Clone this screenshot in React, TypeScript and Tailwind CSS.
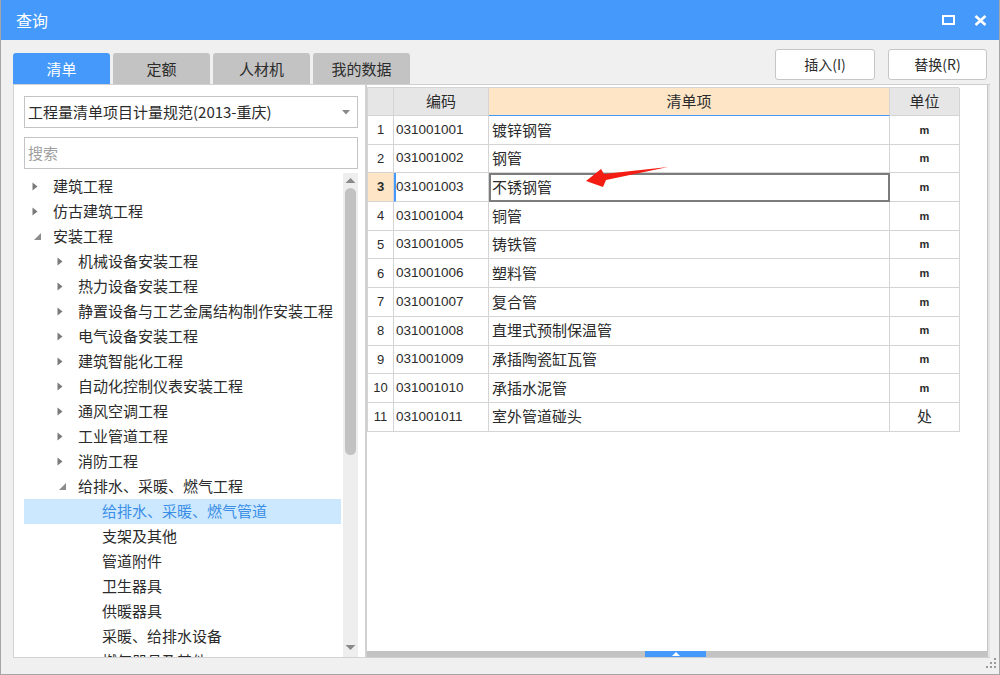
import React from "react";

type Node = { l: 0 | 1 | 2; t: string; a?: "c" | "e"; sel?: boolean };

const tree: Node[] = [
  { l: 0, t: "建筑工程", a: "c" },
  { l: 0, t: "仿古建筑工程", a: "c" },
  { l: 0, t: "安装工程", a: "e" },
  { l: 1, t: "机械设备安装工程", a: "c" },
  { l: 1, t: "热力设备安装工程", a: "c" },
  { l: 1, t: "静置设备与工艺金属结构制作安装工程", a: "c" },
  { l: 1, t: "电气设备安装工程", a: "c" },
  { l: 1, t: "建筑智能化工程", a: "c" },
  { l: 1, t: "自动化控制仪表安装工程", a: "c" },
  { l: 1, t: "通风空调工程", a: "c" },
  { l: 1, t: "工业管道工程", a: "c" },
  { l: 1, t: "消防工程", a: "c" },
  { l: 1, t: "给排水、采暖、燃气工程", a: "e" },
  { l: 2, t: "给排水、采暖、燃气管道", sel: true },
  { l: 2, t: "支架及其他" },
  { l: 2, t: "管道附件" },
  { l: 2, t: "卫生器具" },
  { l: 2, t: "供暖器具" },
  { l: 2, t: "采暖、给排水设备" },
  { l: 2, t: "燃气器具及其他" },
];

const rows: [string, string, string][] = [
  ["031001001", "镀锌钢管", "m"],
  ["031001002", "钢管", "m"],
  ["031001003", "不锈钢管", "m"],
  ["031001004", "铜管", "m"],
  ["031001005", "铸铁管", "m"],
  ["031001006", "塑料管", "m"],
  ["031001007", "复合管", "m"],
  ["031001008", "直埋式预制保温管", "m"],
  ["031001009", "承插陶瓷缸瓦管", "m"],
  ["031001010", "承插水泥管", "m"],
  ["031001011", "室外管道碰头", "处"],
];

const padByLevel = ["pl-[8px]", "pl-[33px]", "pl-[78px]"];

function Arrow({ a }: { a?: "c" | "e" }) {
  if (!a) return null;
  return (
    <div className="w-[21px] h-[25px] flex items-center shrink-0">
      {a === "c" ? (
        <svg width="6" height="9" viewBox="0 0 6 9">
          <polygon points="0.5,0.5 5.5,4.5 0.5,8.5" fill="#7a7a7a" />
        </svg>
      ) : (
        <svg width="9" height="9" viewBox="0 0 9 9" className="ml-[1px]">
          <polygon points="8,1 8,8 1,8" fill="#8c8c8c" />
        </svg>
      )}
    </div>
  );
}

export default function App() {
  return (
    <div className="relative w-[1000px] h-[675px] bg-[#f0f0f0] border-x border-b border-[#a6a6a6] flex flex-col overflow-hidden font-['Noto_Sans_CJK_SC',sans-serif] text-[#2b2b2b]">
      {/* Title bar */}
      <div className="h-[40px] bg-[#4499fa] flex items-center justify-between pl-[15px] pr-[12px] text-white shrink-0">
        <span className="text-[16px] leading-none">查询</span>
        <div className="flex items-center gap-[19px]">
          <svg width="13" height="10" viewBox="0 0 13 10">
            <rect x="1" y="1" width="11" height="8" fill="none" stroke="#fff" strokeWidth="2" />
          </svg>
          <svg width="13" height="11" viewBox="0 0 13 11">
            <path d="M1.5 1 L11.5 10 M11.5 1 L1.5 10" stroke="#fff" strokeWidth="2.6" />
          </svg>
        </div>
      </div>

      {/* Body */}
      <div className="flex-1 flex flex-col pl-[12px] pr-[9px] pt-[9px]">
        {/* Tabs + buttons */}
        <div className="h-[35px] flex justify-between shrink-0">
          <div className="self-end flex gap-[3px]">
            <div className="w-[97px] h-[31px] rounded-t-[3px] bg-[#4499fa] text-white text-[15px] flex items-center justify-center pt-[1px]">清单</div>
            <div className="w-[97px] h-[31px] rounded-t-[3px] bg-[#c3c3c3] text-[15px] flex items-center justify-center pt-[1px]">定额</div>
            <div className="w-[97px] h-[31px] rounded-t-[3px] bg-[#c3c3c3] text-[15px] flex items-center justify-center pt-[1px]">人材机</div>
            <div className="w-[97px] h-[31px] rounded-t-[3px] bg-[#c3c3c3] text-[15px] flex items-center justify-center pt-[1px]">我的数据</div>
          </div>
          <div className="self-start flex gap-[13px] mr-[3px]">
            <button className="w-[100px] h-[31px] bg-white border border-[#c6c6c6] rounded-[3px] text-[14px] flex items-center justify-center">插入(I)</button>
            <button className="w-[99px] h-[31px] bg-white border border-[#c6c6c6] rounded-[3px] text-[14px] flex items-center justify-center">替换(R)</button>
          </div>
        </div>

        {/* Main */}
        <div className="h-[574px] flex shrink-0">
          {/* Left panel */}
          <div className="w-[353px] bg-white border border-[#d2d2d2] flex flex-col pl-[10px] pr-[7px] pt-[11px]">
            <div className="h-[32px] border border-[#c4c4c4] flex items-center justify-between pl-[3px] pr-[7px] text-[15px] shrink-0">
              <span>工程量清单项目计量规范(2013-重庆)</span>
              <svg width="8" height="5" viewBox="0 0 8 5">
                <polygon points="0,0 8,0 4,4.5" fill="#8a8a8a" />
              </svg>
            </div>
            <div className="mt-[9px] h-[32px] border border-[#c4c4c4] flex items-center pl-[3px] text-[15px] text-[#a0a0a0] shrink-0">搜索</div>
            <div className="mt-[4px] flex-1 flex gap-[2px] overflow-hidden">
              <div className="flex-1 flex flex-col overflow-hidden pt-[1px]">
                {tree.map((n, i) => (
                  <div
                    key={i}
                    className={`h-[25px] shrink-0 flex items-center text-[15px] whitespace-nowrap ${padByLevel[n.l]} ${n.sel ? "bg-[#cce8ff] text-[#3a8ee6]" : ""}`}
                  >
                    <Arrow a={n.a} />
                    <span>{n.t}</span>
                  </div>
                ))}
              </div>
              <div className="w-[15px] bg-[#eeeeee] flex flex-col items-center">
                <svg width="11" height="14" viewBox="0 0 11 14" className="mt-[1px] shrink-0">
                  <polygon points="0.5,9 10.5,9 5.5,4" fill="#8a8a8a" />
                </svg>
                <div className="w-[11px] h-[267px] rounded-full bg-[#c2c2c2] shrink-0" />
                <div className="flex-1" />
                <svg width="11" height="14" viewBox="0 0 11 14" className="mb-[2px] shrink-0">
                  <polygon points="0.5,4 10.5,4 5.5,9" fill="#8a8a8a" />
                </svg>
              </div>
            </div>
          </div>

          {/* Right panel */}
          <div className="flex-1 flex border-y border-l border-[#cfcfcf]">
            <div className="flex-1 bg-white flex flex-col">
              <div className="flex-1 pt-[2px]">
                <div className="grid grid-cols-[26px_95px_401px_70px] w-[592px] border-l border-t border-[#d4d4d4]">
                  <div className="h-[28px] bg-[#e6e6e6] border-r border-b border-[#d4d4d4]" />
                  <div className="h-[28px] bg-[#e6e6e6] border-r border-b border-[#d4d4d4] flex items-center justify-center text-[15px]">编码</div>
                  <div className="h-[28px] bg-[#fde5c6] border-r border-b border-b-[#4499fa] border-r-[#d4d4d4] flex items-center justify-center text-[15px]">清单项</div>
                  <div className="h-[28px] bg-[#e6e6e6] border-r border-b border-[#d4d4d4] flex items-center justify-center text-[15px]">单位</div>
                  {rows.map((r, i) => {
                    const sel = i === 2;
                    return (
                      <React.Fragment key={i}>
                        <div
                          className={`h-[28.7px] border-r border-b border-[#d4d4d4] flex items-center justify-center font-['Liberation_Sans',sans-serif] text-[13px] ${sel ? "bg-[#fde5c6] font-bold" : ""}`}
                        >
                          {i + 1}
                        </div>
                        <div
                          className={`h-[28.7px] border-r border-b border-[#d4d4d4] flex items-center font-['Liberation_Sans',sans-serif] text-[13.5px] ${sel ? "border-l-2 border-l-[#4499fa] pl-0" : "pl-[2px]"}`}
                        >
                          {r[0]}
                        </div>
                        <div
                          className={`h-[28.7px] border-r border-b border-[#d4d4d4] flex items-center text-[15px] pl-[3px] ${sel ? "outline-2 outline-[#7c7c7c] -outline-offset-2" : ""}`}
                        >
                          {r[1]}
                        </div>
                        <div
                          className={`h-[28.7px] border-r border-b border-[#d4d4d4] flex items-center justify-center ${r[2] === "m" ? "font-['Liberation_Sans',sans-serif] text-[11px] font-bold" : "text-[15px]"}`}
                        >
                          {r[2]}
                        </div>
                      </React.Fragment>
                    );
                  })}
                </div>
              </div>
              <div className="relative h-[6px] bg-[#c3c3c3] shrink-0">
                <div className="absolute left-[278px] top-0 w-[61px] h-[6px] bg-[#4499fa] flex items-center justify-center">
                  <svg width="8" height="4" viewBox="0 0 8 4">
                    <polygon points="0,4 8,4 4,0" fill="#fff" />
                  </svg>
                </div>
              </div>
            </div>
            <div className="w-[3px] bg-[#e4e4e4] border-l border-[#c4c4c4]" />
          </div>
        </div>
      </div>

      {/* Red annotation arrow */}
      <svg className="absolute left-[584px] top-[164px]" width="86" height="28" viewBox="0 0 86 28">
        <polygon points="1,17 16,5 19,10 83,3 21,16 18,23" fill="#f41d14" />
      </svg>

      {/* Resize grip */}
      <svg className="absolute left-[985px] top-[657px]" width="12" height="12" viewBox="0 0 12 12">
        <rect x="8" y="1" width="2" height="2" fill="#9a9a9a" />
        <rect x="4" y="5" width="2" height="2" fill="#9a9a9a" />
        <rect x="8" y="5" width="2" height="2" fill="#9a9a9a" />
        <rect x="0" y="9" width="2" height="2" fill="#9a9a9a" />
        <rect x="4" y="9" width="2" height="2" fill="#9a9a9a" />
        <rect x="8" y="9" width="2" height="2" fill="#9a9a9a" />
      </svg>
    </div>
  );
}
